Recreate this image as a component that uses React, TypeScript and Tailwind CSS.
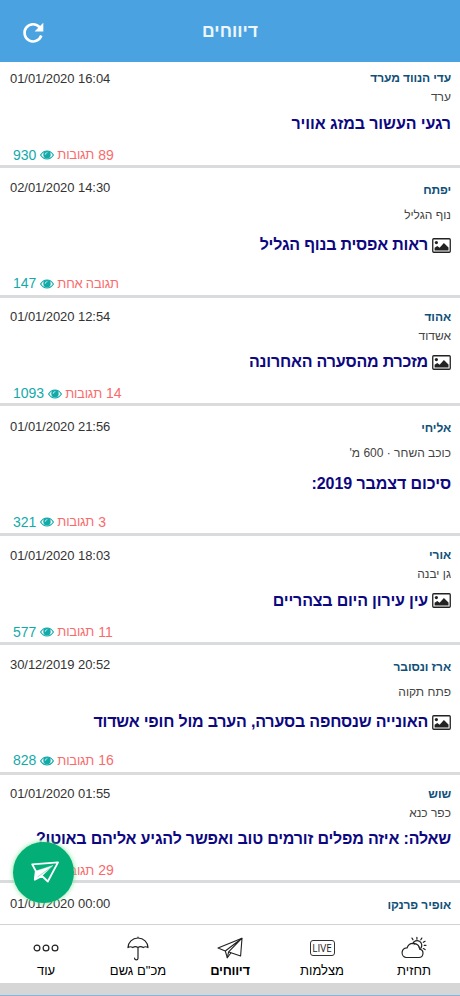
import clsx from "clsx";

type Report = {
  id: number;
  author: string;
  place: string;
  title: string;
  date: string;
  views?: number;
  count?: number;
  comments?: string;
  photo?: boolean;
  tall?: boolean;
};

const reports: Report[] = [
  { id: 1, author: "עדי הנווד מערד", place: "ערד", title: "רגעי העשור במזג אוויר", date: "01/01/2020 16:04", views: 930, count: 89, comments: "תגובות" },
  { id: 2, author: "יפתח", place: "נוף הגליל", title: "ראות אפסית בנוף הגליל", date: "02/01/2020 14:30", views: 147, comments: "תגובה אחת", photo: true, tall: true },
  { id: 3, author: "אהוד", place: "אשדוד", title: "מזכרת מהסערה האחרונה", date: "01/01/2020 12:54", views: 1093, count: 14, comments: "תגובות", photo: true },
  { id: 4, author: "אליחי", place: "כוכב השחר · 600 מ'", title: "סיכום דצמבר 2019:", date: "01/01/2020 21:56", views: 321, count: 3, comments: "תגובות", tall: true },
  { id: 5, author: "אורי", place: "גן יבנה", title: "עין עירון היום בצהריים", date: "01/01/2020 18:03", views: 577, count: 11, comments: "תגובות", photo: true },
  { id: 6, author: "ארז ונסובר", place: "פתח תקוה", title: "האונייה שנסחפה בסערה, הערב מול חופי אשדוד", date: "30/12/2019 20:52", views: 828, count: 16, comments: "תגובות", photo: true, tall: true },
  { id: 7, author: "שוש", place: "כפר כנא", title: "שאלה: איזה מפלים זורמים טוב ואפשר להגיע אליהם באוטו?", date: "01/01/2020 01:55", views: 312, count: 29, comments: "תגובות" },
  { id: 8, author: "אופיר פרנקו", place: "", title: "", date: "01/01/2020 00:00", tall: true },
];

function PhotoIcon() {
  return (
    <svg className="ml-1 h-[15px] w-[19px] shrink-0" viewBox="0 0 19 15">
      <rect x="0.75" y="0.75" width="17.5" height="13.5" rx="1" fill="none" stroke="#222" strokeWidth="1.3" />
      <circle cx="4.4" cy="4.6" r="1.6" fill="#222" />
      <path d="M2.6 12.4V9.8l2.7-1.8 2.300 1.800 4.300-4.900 4.600 4.700v2.800z" fill="#222" />
    </svg>
  );
}

function EyeIcon() {
  return (
    <svg className="h-2.5 w-3.5 shrink-0" viewBox="0 0 14 10">
      <path d="M.6 5C2.200 2.400 4.500 1 7 1s4.800 1.400 6.400 4C11.800 7.600 9.500 9 7 9S2.200 7.600.600 5z" fill="none" stroke="#12aaa9" strokeWidth="1.2" />
      <circle cx="7" cy="4.700" r="3.700" fill="#12aaa9" />
      <path d="M5.200 4.400A1.800 1.800 0 0 1 7 2.600" fill="none" stroke="#fff" strokeWidth="0.700" strokeLinecap="round" />
    </svg>
  );
}

function SendIcon() {
  return (
    <svg className="h-[22px] w-[30px]" viewBox="0 0 30 22" fill="none" stroke="#fff" strokeWidth="1.8" strokeLinejoin="round">
      <path d="M3.200 3.300 29 1.300 18.800 20.500 13 15 5.800 18.700 6.800 10z" />
      <path d="M6.800 10 24 4.500 13 15 5.800 18.700z" fill="#fff" strokeWidth="0.400" />
      <path d="M8.500 16 25.500 3.800" stroke="#04ae77" strokeWidth="0.400" />
    </svg>
  );
}

function ForecastIcon() {
  return (
    <svg className="h-6 w-7" viewBox="0 0 28 24" fill="none" stroke="#222" strokeWidth="1.2" strokeLinecap="round">
      <path d="M6 21.500h12.800a4.200 4.200 0 0 0 .900-8.300 6.500 6.500 0 0 0-12.600-1.400A4.900 4.900 0 0 0 6 21.500z" />
      <path d="M12.700 7.600a4.700 4.700 0 1 1 8 4.700" />
      <path d="M13.800 8.600a3.400 3.400 0 0 1 5.200 2.900" strokeWidth="0.700" />
      <path d="M16.900 1.300v1.900M12 2.100l1 1.700M21.800 2.100l-1 1.700M25.100 5.300l-1.800 1M24.200 9.300H26M23.300 12.600l1.800 1" />
    </svg>
  );
}

function LiveIcon() {
  return (
    <span dir="ltr" className="flex h-4 w-[25px] items-center justify-center rounded-[3px] border border-[#333]">
      <span className="font-['Open_Sans',sans-serif] text-[10px] leading-none text-[#222]">LIVE</span>
    </span>
  );
}

function PlaneIcon() {
  return (
    <svg className="h-6 w-[26px]" viewBox="0 0 26 24" fill="none" stroke="#222" strokeWidth="1.1" strokeLinejoin="round">
      <path d="M1 12 25 2.200 23.600 20 14 16.700 10.300 21.800 8.300 15z" />
      <path d="M25 2.200 8.300 15M25 2.200 11.600 15.800 10.300 21.800M11.600 15.800 14 16.700" />
    </svg>
  );
}

function UmbrellaIcon() {
  return (
    <svg className="h-[25px] w-[22px]" viewBox="0 0 22 25" fill="none" stroke="#222" strokeWidth="1.2" strokeLinecap="round" strokeLinejoin="round">
      <path d="M1 11.600C1 6.300 5.400 2 11 2s10 4.300 10 9.600c-1.400-1-3.400-1-4.800 0-1.500-1-3.700-1-5.200 0-1.500-1-3.700-1-5.200 0-1.400-1-3.400-1-4.800 0zM11 1v1M11 11.600v10.600a1.700 1.700 0 0 1-3.400 0" />
    </svg>
  );
}

function DotsIcon() {
  return (
    <svg className="h-2.5 w-[26px]" viewBox="0 0 26 10" fill="none" stroke="#222" strokeWidth="1.2">
      <circle cx="4" cy="5" r="2.9" />
      <circle cx="13" cy="5" r="2.9" />
      <circle cx="22" cy="5" r="2.9" />
    </svg>
  );
}

const tabs = [
  { label: "תחזית", icon: <ForecastIcon /> },
  { label: "מצלמות", icon: <LiveIcon /> },
  { label: "דיווחים", icon: <PlaneIcon />, active: true },
  { label: "מכ\"ם גשם", icon: <UmbrellaIcon /> },
  { label: "עוד", icon: <DotsIcon /> },
];

function ReportRow({ report }: { report: Report }) {
  const { tall } = report;
  return (
    <article
      className={clsx(
        "shrink-0 border-b-[3px] border-[#d9dbdd] pt-2.5 pr-[9px] pl-2.5",
        tall ? "h-[130px]" : "h-[108.5px]"
      )}
    >
      <div className={clsx("flex items-center justify-between", tall ? "h-6" : "h-[18px]")}>
        <h3 className="text-[12px] font-bold tracking-[-0.1px] text-[#0f5078]">{report.author}</h3>
        <time dir="ltr" className={clsx("pt-px text-[13px] tracking-[-0.06px] text-[#333]", tall && "pb-1")}>
          {report.date}
        </time>
      </div>
      <p className={clsx("flex items-center text-[12px] text-[#444]", tall ? "h-[26px]" : "h-5")}>{report.place}</p>
      <h2
        className={clsx(
          "flex items-center pt-px text-[16px] font-bold whitespace-nowrap text-[#0d0780]",
          tall ? "h-[34px]" : "h-8",
          report.title.length < 22 && !report.photo ? "tracking-[-0.08px]" : "tracking-[-0.19px]"
        )}
      >
        {report.photo && <PhotoIcon />}
        {report.title}
      </h2>
      {report.comments && (
        <div
          className={clsx(
            "flex h-5 items-center justify-end gap-[3.5px] pl-[3px] text-[14px]",
            tall ? "mt-3" : "mt-1.5"
          )}
        >
          <span className="flex items-center gap-1 text-[#fa6a6c]">
            {report.count && <span>{report.count}</span>}
            <span className="text-[13px] tracking-[-0.2px]">{report.comments}</span>
          </span>
          <EyeIcon />
          <span className="text-[#12aaa9]">{report.views}</span>
        </div>
      )}
    </article>
  );
}

export default function App() {
  return (
    <div
      dir="rtl"
      className="relative flex h-[996px] w-[460px] flex-col overflow-hidden bg-white font-['Liberation_Sans',Arial,sans-serif]"
    >
      <header className="z-10 grid h-[62px] shrink-0 grid-cols-3 items-center bg-[#4ba2e0] text-white">
        <span />
        <h1 className="text-center text-[17.5px] font-bold text-white/90">דיווחים</h1>
        <svg className="mt-[3px] mr-auto ml-[22px] size-[22px]" viewBox="0 0 22 22">
          <path d="M17.7 5.300A8.600 8.600 0 1 0 19.300 13.500" fill="none" stroke="#fff" strokeWidth="2.600" />
          <path d="M21.300.8V9.500H12.600z" fill="#fff" />
        </svg>
      </header>

      <main className="-mt-[3px] flex min-h-0 flex-1 flex-col overflow-hidden">
        {reports.map((report) => (
          <ReportRow key={report.id} report={report} />
        ))}
      </main>

      <button className="absolute top-[841.5px] left-[13px] flex size-[61px] items-center justify-center rounded-full bg-[#04ae77] shadow-[0_0_5px_#7be39a]">
        <SendIcon />
      </button>

      <nav className="z-10 grid h-[59px] shrink-0 grid-cols-5 border-t border-[#d0d2d4] bg-white">
        {tabs.map((tab) => (
          <a key={tab.label} className="flex flex-col items-center pt-2.5">
            <span className="flex h-[26px] items-center">{tab.icon}</span>
            <span className={clsx("text-[13px] leading-5 text-black", tab.active && "font-bold tracking-[-0.3px]")}>
              {tab.label}
            </span>
          </a>
        ))}
      </nav>
      <div className="h-[13px] shrink-0 border-b border-[#85b4dc] bg-[#d6d6d6]" />
    </div>
  );
}
